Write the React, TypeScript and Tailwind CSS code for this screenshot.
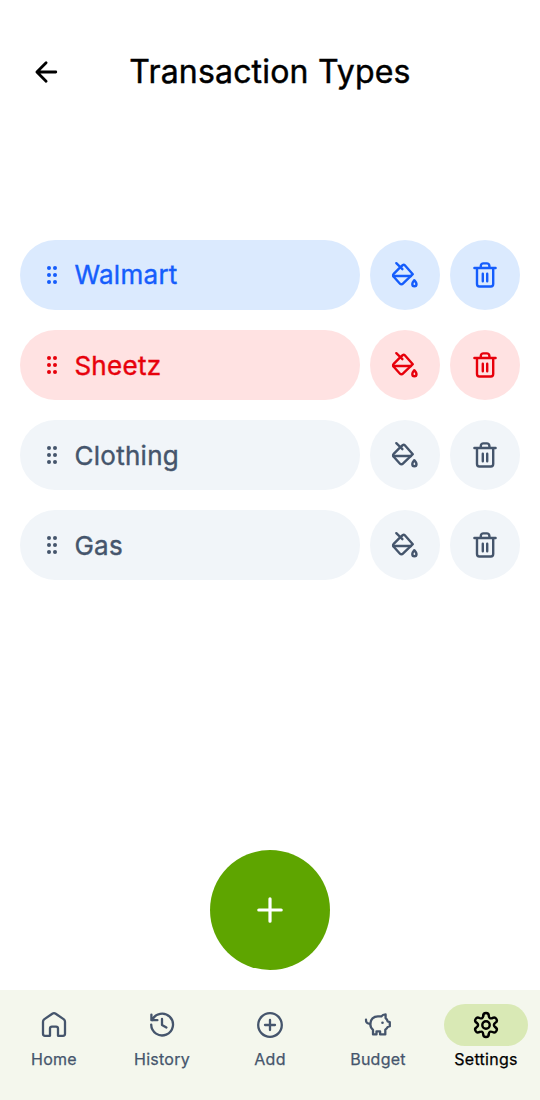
import type { ReactNode } from "react";

function Icon({ children, width = 2.4 }: { children: ReactNode; width?: number }) {
  return (
    <svg
      className="size-[30px] shrink-0"
      viewBox="0 0 30 30"
      fill="none"
      stroke="currentColor"
      strokeWidth={width}
      strokeLinecap="round"
      strokeLinejoin="round"
      aria-hidden="true"
    >
      {children}
    </svg>
  );
}

const BackIcon = () => (
  <Icon width={2.8}>
    <path d="M24.8 15H6.4M15.1 5.7 5.9 15l9.2 9.3" />
  </Icon>
);

const BucketIcon = () => (
  <Icon>
    <path d="M6.3 3.2 12.4 9.2" />
    <path d="M9.4 8.2 3.7 13.9a2 2 0 0 0 0 2.9l6.3 6.9a2 2 0 0 0 2.9 0L22.8 14.2 14.6 5a1.2 1.2 0 0 0-1.7 0L9.4 8.2" />
    <path d="M3.4 16H21" />
    <path d="M24.3 20.2c-1.1 1.4-2 2.5-2 3.8a2.1 2.3 0 0 0 4.2 0c0-1.3-1-2.4-2.2-3.8Z" />
  </Icon>
);

const TrashIcon = () => (
  <Icon>
    <path d="M4.4 8h21.2M10.8 8V6a2.6 2.6 0 0 1 2.6-2.6h3.4A2.6 2.6 0 0 1 19.4 6v2M7 8v16.1a2.4 2.4 0 0 0 2.4 2.4h11.4a2.4 2.4 0 0 0 2.4-2.4V8M12.8 13.8v7.4M17.2 13.8v7.4" />
  </Icon>
);

const GripIcon = () => (
  <svg className="h-[18px] w-[10px] shrink-0" viewBox="0 0 10 18" fill="currentColor" aria-hidden="true">
    {[2, 9, 16].map((y) => (
      <g key={y}>
        <circle cx="2" cy={y} r="2" />
        <circle cx="8" cy={y} r="2" />
      </g>
    ))}
  </svg>
);

const HomeIcon = () => (
  <Icon width={2.3}>
    <path d="M4 11.7c0-.9.4-1.7 1.1-2.3l8.2-5.7a3 3 0 0 1 3.4 0l8.2 5.7c.7.6 1.1 1.4 1.1 2.3v12.1a2 2 0 0 1-2 2H19v-7.2a2 2 0 0 0-2-2h-4a2 2 0 0 0-2 2v7.2H6a2 2 0 0 1-2-2Z" />
  </Icon>
);

const HistoryIcon = () => (
  <Icon width={2.3}>
    <path d="M4.4 4.6V10.2H10.4M5.1 10.2A10.9 10.9 0 1 1 4.2 14.6M15 9v6l4.4 2.5" />
  </Icon>
);

const AddIcon = () => (
  <Icon width={2.3}>
    <circle cx="15" cy="15" r="11.8" />
    <path d="M10 15h10M15 10v10" />
  </Icon>
);

const BudgetIcon = () => (
  <Icon width={2.3}>
    <path d="M3 9.7c-.2 2.5 1.2 4.1 4.2 4.1" />
    <path d="M7.3 14c0-4.7 3.4-7.6 7.6-7.6h3.5c.8-1.2 2.2-2 4.2-2v3.7c1 .8 1.8 2 2.1 3.4l2.1.7v4l-2.1.8c-.6 1.1-1.3 1.9-2.4 2.6v4.8h-5.2v-3h-3.6v3H10v-4.6c-1.7-1.4-2.7-3.4-2.7-5.8Z" />
    <circle cx="19.5" cy="12.7" r="1.3" fill="currentColor" stroke="none" />
  </Icon>
);

const SettingsIcon = () => (
  <Icon>
    {[0, 60, 120, 180, 240, 300].map((angle) => (
      <path key={angle} transform={`rotate(${angle} 15 15)`} d="M12.2 5.8a2.8 2.8 0 0 1 5.6 0Q18.2 9.46 21.57 7.98" />
    ))}
    <circle cx="15" cy="15" r="3.7" />
  </Icon>
);

const types = [
  { name: "Walmart", tone: "bg-blue-100 text-blue-600", label: "pt-0" },
  { name: "Sheetz", tone: "bg-red-100 text-red-600", label: "pt-0.5" },
  { name: "Clothing", tone: "bg-slate-100 text-slate-600", label: "pt-0.5" },
  { name: "Gas", tone: "bg-slate-100 text-slate-600", label: "pt-0.5" },
];

const tabs = [
  { label: "Home", icon: HomeIcon },
  { label: "History", icon: HistoryIcon },
  { label: "Add", icon: AddIcon },
  { label: "Budget", icon: BudgetIcon },
  { label: "Settings", icon: SettingsIcon, active: true },
];

export default function App() {
  return (
    <div className="flex h-[1100px] w-[540px] flex-col bg-white font-['Inter',sans-serif] text-black">
      <header className="grid h-36 grid-cols-[92px_1fr_92px] items-center">
        <button className="pl-[31px]" aria-label="Back">
          <BackIcon />
        </button>
        <h1 className="text-center text-[32px] leading-10 tracking-[0.006em] [-webkit-text-stroke:0.45px_currentColor]">Transaction Types</h1>
      </header>

      <main className="flex flex-1 flex-col px-5 pt-24">
        <ul className="flex flex-col gap-5">
          {types.map(({ name, tone, label }) => (
            <li key={name} className="flex gap-2.5">
              <div className={`flex h-[70px] flex-1 items-center gap-[17.4px] rounded-full pl-[27px] ${tone}`}>
                <GripIcon />
                <span className={`text-[26px] leading-8 tracking-[0.011em] [-webkit-text-stroke:0.4px_currentColor] ${label}`}>{name}</span>
              </div>
              <button className={`flex size-[70px] items-center justify-center rounded-full ${tone}`} aria-label="Color">
                <BucketIcon />
              </button>
              <button className={`flex size-[70px] items-center justify-center rounded-full ${tone}`} aria-label="Delete">
                <TrashIcon />
              </button>
            </li>
          ))}
        </ul>
        <button
          className="mt-auto mb-5 flex size-[120px] items-center justify-center self-center rounded-full bg-lime-600 text-white"
          aria-label="Add type"
        >
          <Icon width={3.2}>
            <path d="M3.8 15h22.4M15 3.8v22.4" />
          </Icon>
        </button>
      </main>

      <nav className="grid h-[110px] grid-cols-5 bg-[#f4f7ed] pt-3.5">
        {tabs.map(({ label, icon: TabIcon, active }) => (
          <a key={label} className={`flex flex-col items-center ${active ? "text-black" : "text-slate-600"}`}>
            <span className={`flex h-[42px] w-[84px] items-center justify-center rounded-full ${active ? "bg-[#d9e9b5]" : ""}`}>
              <TabIcon />
            </span>
            <span className="mt-px text-base leading-6 tracking-[0.016em] [-webkit-text-stroke:0.25px_currentColor]">{label}</span>
          </a>
        ))}
      </nav>
    </div>
  );
}
